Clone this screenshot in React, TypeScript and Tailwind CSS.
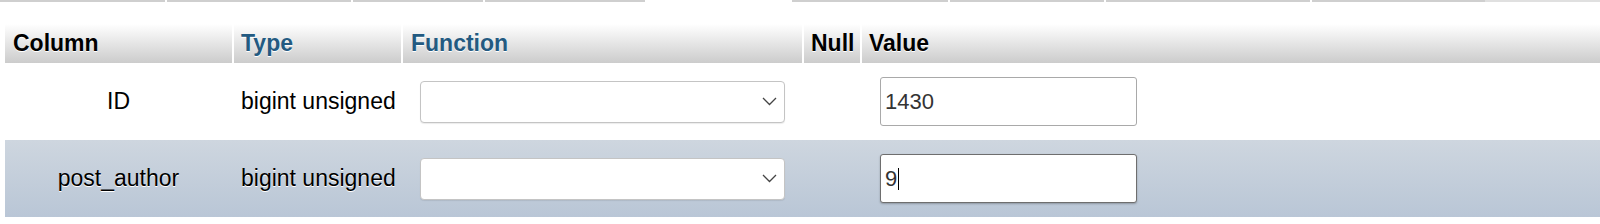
import React from "react";

function Chevron() {
  return (
    <svg width="15" height="9" viewBox="0 0 15 9" className="shrink-0">
      <polyline points="1,1 7.5,7.5 14,1" fill="none" stroke="#444" strokeWidth="1.3" />
    </svg>
  );
}

function SelectBox() {
  return (
    <div className="ml-[19px] w-[365px] h-[42px] bg-white border border-[#c4c4c4] rounded-[4px] shadow-[0_1px_1px_rgba(0,0,0,0.08)] flex items-center justify-end pr-[7px]">
      <Chevron />
    </div>
  );
}

export default function App() {
  return (
    <div className="w-[1600px] h-[224px] bg-white overflow-hidden font-['Liberation_Sans',Arial,sans-serif] text-[23px] text-black">
      <div className="flex h-[2px]">
        <div className="w-[165px] bg-[#cfcfcf]" />
        <div className="w-[2px] bg-white" />
        <div className="w-[184px] bg-[#cfcfcf]" />
        <div className="w-[2px] bg-white" />
        <div className="w-[130px] bg-[#cfcfcf]" />
        <div className="w-[2px] bg-white" />
        <div className="w-[160px] bg-[#cfcfcf]" />
        <div className="w-[147px] bg-white" />
        <div className="w-[156px] bg-[#cfcfcf]" />
        <div className="w-[2px] bg-white" />
        <div className="w-[154px] bg-[#cfcfcf]" />
        <div className="w-[2px] bg-white" />
        <div className="w-[204px] bg-[#cfcfcf]" />
        <div className="w-[2px] bg-white" />
        <div className="w-[173px] bg-[#cfcfcf]" />
        <div className="flex-1 bg-[#e0e0e0]" />
      </div>
      <div className="ml-[5px] mt-[22px]">
        <div className="flex h-[39px] font-bold [text-shadow:0_1px_0_#fff]">
          <div className="w-[227px] pl-[8px] flex items-center bg-gradient-to-b from-white to-[#cccccc]">Column</div>
          <div className="w-[169px] border-l-2 border-white pl-[7px] flex items-center bg-gradient-to-b from-white to-[#cccccc] text-[#235a81]">Type</div>
          <div className="w-[401px] border-l-2 border-white pl-[8px] flex items-center bg-gradient-to-b from-white to-[#cccccc] text-[#235a81]">Function</div>
          <div className="w-[58px] border-l-2 border-white pl-[7px] flex items-center bg-gradient-to-b from-white to-[#cccccc]">Null</div>
          <div className="flex-1 border-l-2 border-white pl-[7px] flex items-center bg-gradient-to-b from-white to-[#cccccc]">Value</div>
        </div>
        <div className="flex h-[77px] items-center [text-shadow:0_1px_0_#fff]">
          <div className="w-[227px] text-center">ID</div>
          <div className="w-[169px] pl-[9px] whitespace-nowrap">bigint unsigned</div>
          <div className="w-[401px]"><SelectBox /></div>
          <div className="w-[58px]" />
          <div className="flex-1">
            <div className="ml-[20px] w-[257px] h-[49px] bg-white border border-[#a9a9a9] rounded-[3px] flex items-center pl-[4px] text-[#333] text-[22px]">1430</div>
          </div>
        </div>
        <div className="flex h-[77px] items-center bg-gradient-to-b from-[#ced6df] to-[#b9c6d6] [text-shadow:0_1px_0_#fff]">
          <div className="w-[227px] text-center">post_author</div>
          <div className="w-[169px] pl-[9px] whitespace-nowrap">bigint unsigned</div>
          <div className="w-[401px]"><SelectBox /></div>
          <div className="w-[58px]" />
          <div className="flex-1">
            <div className="ml-[20px] w-[257px] h-[49px] bg-white border border-[#6e6e6e] rounded-[3px] shadow-[0_1px_2px_rgba(0,0,0,0.25)] flex items-center pl-[4px] text-[#333] text-[22px] [text-shadow:none]">
              <span>9</span>
              <span className="inline-block w-[1px] h-[22px] bg-black ml-[1px]" />
            </div>
          </div>
        </div>
      </div>
    </div>
  );
}
